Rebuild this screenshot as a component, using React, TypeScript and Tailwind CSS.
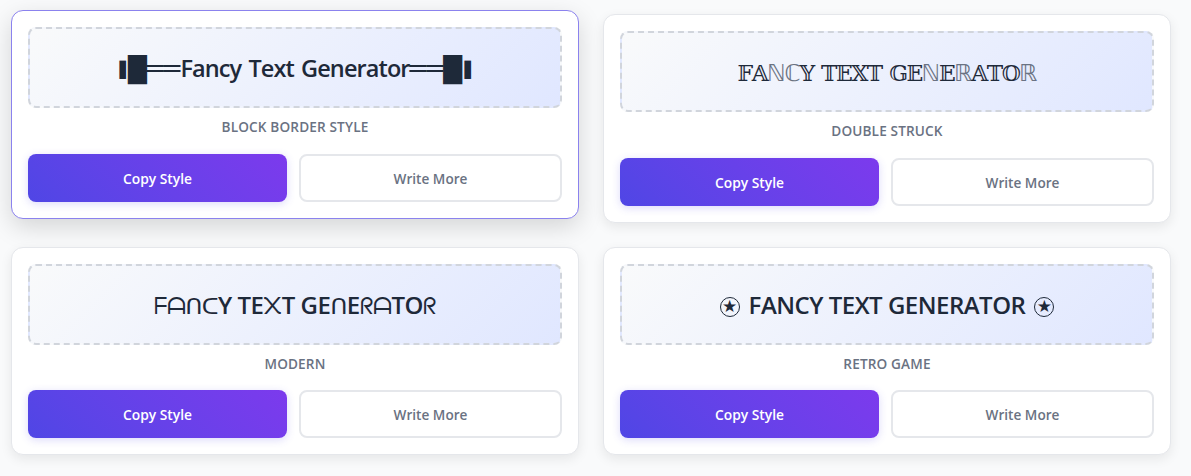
import type { ReactNode } from "react";

function Star() {
  return (
    <span className="mt-[3px] flex size-5 items-center justify-center rounded-full border border-gray-800 font-['DejaVu_Sans'] text-[17px] leading-none font-normal">
      ★
    </span>
  );
}

function Thin({ children }: { children: string }) {
  return (
    <span className="font-['DejaVu_Sans'] text-[23px] font-normal tracking-[-0.6px]">
      {children}
    </span>
  );
}

function Outline({ children }: { children: string }) {
  return (
    <span className="font-['DejaVu_Sans'] text-[23px] tracking-[-1.2px] text-gray-500">
      {children}
    </span>
  );
}

const stylesData: { name: string; active?: boolean; preview: ReactNode }[] = [
  {
    name: "Block Border Style",
    active: true,
    preview: (
      <div className="flex items-center font-['DejaVu_Sans'] leading-none">
        <span className="-mr-px scale-x-75 text-[24px]">▮</span>
        <span className="mt-[5px] text-[24.5px]">█</span>
        <span className="mt-[5px] font-['Liberation_Mono'] text-[28px] font-normal">
          ══
        </span>
        <span className="mt-[3px] font-['Open_Sans'] text-[23.5px] tracking-[-0.9px] [word-spacing:2px]">
          Fancy Text Generator
        </span>
        <span className="mt-[5px] font-['Liberation_Mono'] text-[28px] font-normal">
          ══
        </span>
        <span className="mt-[5px] text-[24.5px]">█</span>
        <span className="-ml-px scale-x-75 text-[24px]">▮</span>
      </div>
    ),
  },
  {
    name: "Double Struck",
    preview: (
      <span className="mt-1 font-['DejaVu_Serif'] text-[22px] font-normal tracking-[-1.5px] [word-spacing:2px]">
        𝔽𝔸<Outline>ℕℂ</Outline>𝕐 𝕋𝔼𝕏𝕋 𝔾𝔼<Outline>ℕ</Outline>𝔼
        <Outline>ℝ</Outline>𝔸𝕋𝕆<Outline>ℝ</Outline>
      </span>
    ),
  },
  {
    name: "Modern",
    preview: (
      <span className="mt-0.5 tracking-[-0.5px]">
        <Thin>ᖴᗩᑎᑕ</Thin>Y TE<Thin>᙭</Thin>T GE<Thin>ᑎ</Thin>E<Thin>ᖇᗩ</Thin>TO
        <Thin>ᖇ</Thin>
      </span>
    ),
  },
  {
    name: "Retro Game",
    preview: (
      <div className="mt-0.5 flex items-center gap-[9px]">
        <Star />
        <span className="tracking-[-0.5px]">FANCY TEXT GENERATOR</span>
        <Star />
      </div>
    ),
  },
];

function App() {
  return (
    <main className="h-[476px] overflow-hidden bg-[#f9fafb] pt-[14.2px] pl-[11px] font-['Open_Sans','Noto_Sans','DejaVu_Sans',sans-serif]">
      <div className="grid w-[1160px] grid-cols-2 gap-6">
        {stylesData.map((style) => (
          <div
            key={style.name}
            className={
              style.active
                ? "-mt-1 mb-1 rounded-xl border border-[#8b82ee] bg-white p-4 shadow-[0_8px_25px_rgba(0,0,0,0.15)]"
                : "rounded-xl border border-gray-200 bg-white p-4 shadow-[0_4px_12px_rgba(0,0,0,0.08)]"
            }
          >
            <div className="flex h-[81px] items-center justify-center rounded-lg border-2 border-dashed border-gray-300 bg-linear-135 from-[#f9fafb] to-[#e0e7ff] text-2xl font-semibold whitespace-nowrap text-gray-800">
              {style.preview}
            </div>
            <div className="mt-2 h-[22.5px] text-center text-[13.6px] leading-[22.5px] font-semibold tracking-[0.15px] text-gray-500 uppercase">
              {style.name}
            </div>
            <div className="mt-[15px] grid grid-cols-[259px_263px] gap-3">
              <button className="h-12 rounded-lg bg-linear-45 from-[#4f46e5] to-[#7c3aed] pt-[3px] text-[13.8px] font-semibold text-white shadow-[0_2px_8px_rgba(79,70,229,0.2)]">
                Copy Style
              </button>
              <button className="h-12 rounded-lg border-2 border-gray-200 bg-white pt-[3px] text-[13.6px] font-semibold text-gray-500">
                Write More
              </button>
            </div>
          </div>
        ))}
      </div>
    </main>
  );
}

export default App;
